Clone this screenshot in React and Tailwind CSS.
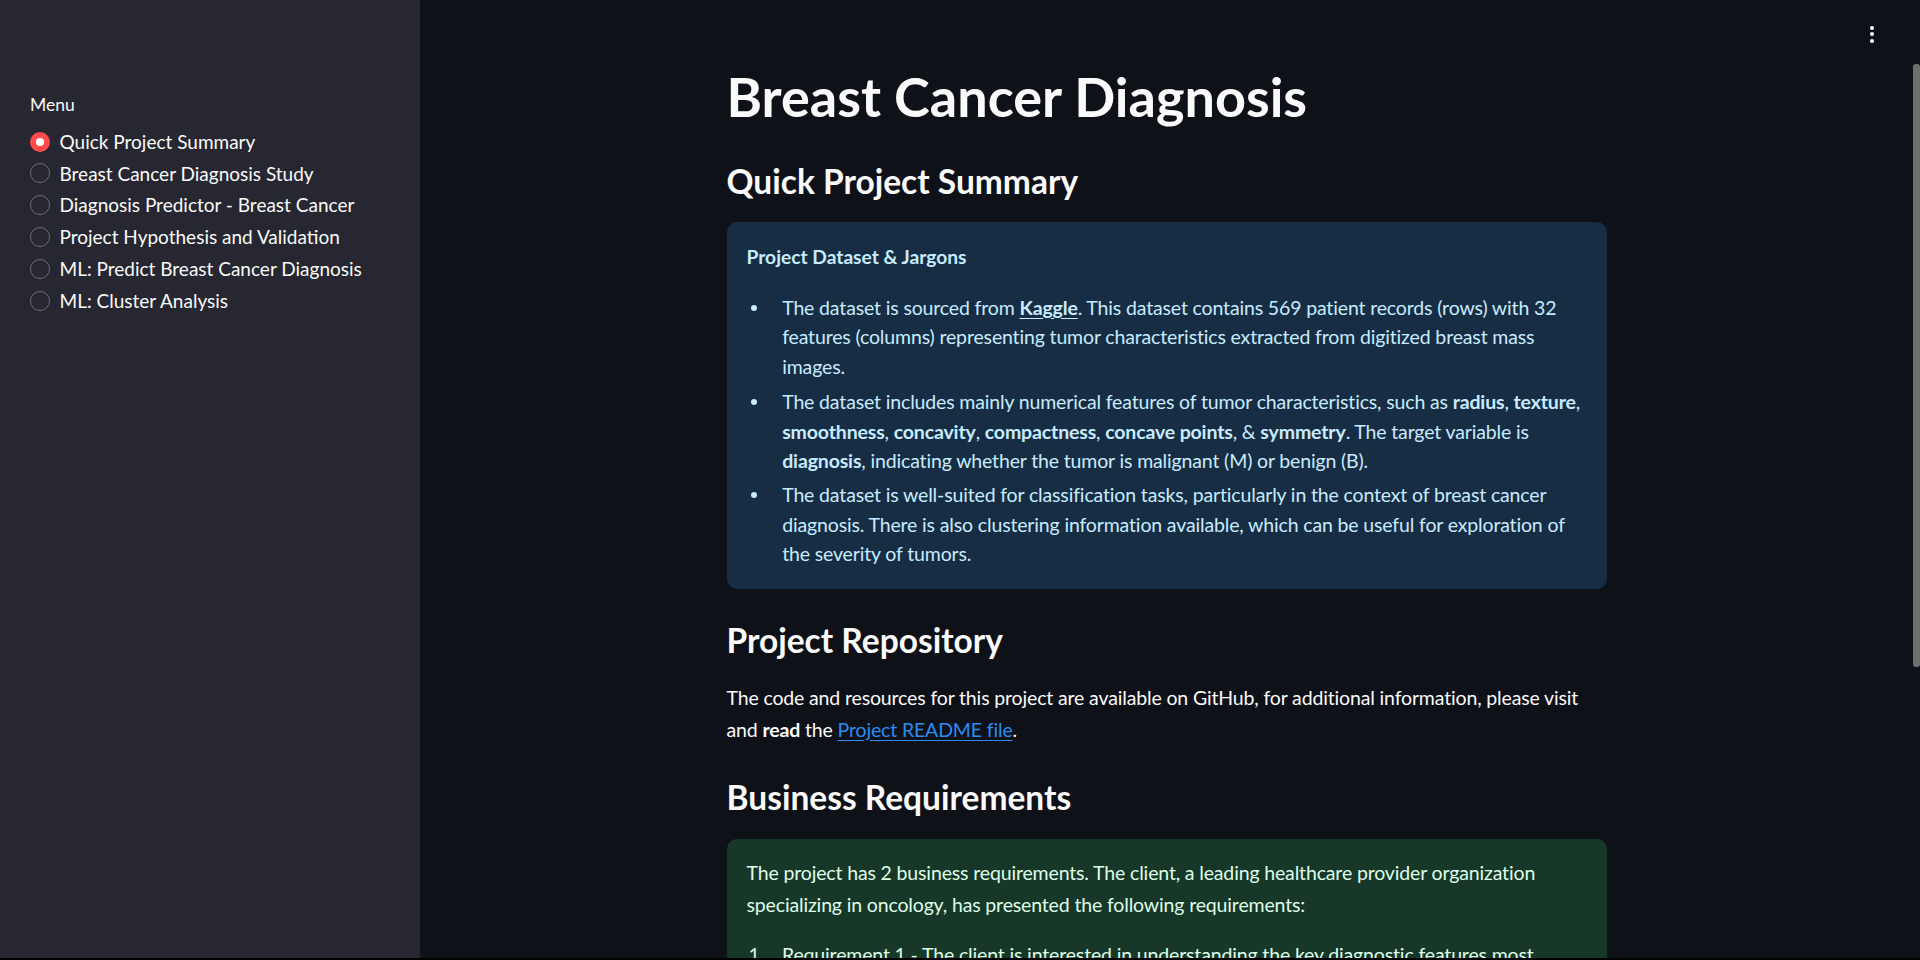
import React from "react";

const menu = [
  "Quick Project Summary",
  "Breast Cancer Diagnosis Study",
  "Diagnosis Predictor - Breast Cancer",
  "Project Hypothesis and Validation",
  "ML: Predict Breast Cancer Diagnosis",
  "ML: Cluster Analysis",
];

function Radio({ label, selected }) {
  return (
    <div className="flex h-[31.8px] items-center">
      {selected ? (
        <div className="flex h-[20px] w-[20px] items-center justify-center rounded-full bg-[#ff4b4b]">
          <div className="h-[8px] w-[8px] rounded-full bg-white" />
        </div>
      ) : (
        <div className="h-[20px] w-[20px] rounded-full border border-[#6b6c74] bg-[#262730]" />
      )}
      <span className="ml-[9.5px] text-[19px] leading-[31.8px] text-[#fafafa]">{label}</span>
    </div>
  );
}

function Bullet({ children, className = "" }) {
  return (
    <li className={"flex " + className}>
      <span className="flex h-[29.5px] w-[35.7px] shrink-0 items-center pl-[4.5px]">
        <span className="h-[6px] w-[6px] rounded-full bg-[#c7ebff]" />
      </span>
      <span className="flex-1 whitespace-nowrap">{children}</span>
    </li>
  );
}

export default function App() {
  return (
    <div className="relative flex h-screen w-full flex-col overflow-hidden bg-[#0e1117] text-[#fafafa] [font-family:Lato,'Noto_Sans',sans-serif]">
      <div className="flex min-h-0 flex-1">
        <aside className="w-[420px] shrink-0 bg-[#262730] pl-[30px] pt-[93px]">
          <div className="text-[17.5px] leading-[24px] text-[#fafafa]">Menu</div>
          <div className="mt-[8.8px] flex flex-col">
            {menu.map((m, i) => (
              <Radio key={m} label={m} selected={i === 0} />
            ))}
          </div>
        </aside>

        <main className="min-w-0 flex-1 pr-[7px]">
          <div className="mx-auto w-[880px] pt-[66px]">
            <h1 className="text-[54px] font-bold leading-[62px]">Breast Cancer Diagnosis</h1>

            <h3 className="mt-[32.6px] text-[33.5px] font-bold leading-[40px]">Quick Project Summary</h3>

            <div className="mt-[21.4px] rounded-[10px] bg-[#172d43] px-[20px] pb-[20.2px] pt-[19px] text-[#c7ebff]">
              <p className="text-[19.2px] font-bold leading-[32px]">Project Dataset &amp; Jargons</p>
              <ul className="mt-[19.8px] flex flex-col text-[19.5px] leading-[29.5px] tracking-[-0.15px]">
                <Bullet className="mb-[5.8px]">
                  The dataset is sourced from{" "}
                  <a className="font-bold underline underline-offset-[3px]">Kaggle</a>. This dataset contains 569
                  patient records (rows) with 32
                  <br />
                  features (columns) representing tumor characteristics extracted from digitized breast mass
                  <br />
                  images.
                </Bullet>
                <Bullet className="mb-[4.6px]">
                  The dataset includes mainly numerical features of tumor characteristics, such as <b>radius</b>,{" "}
                  <b>texture</b>,
                  <br />
                  <b>smoothness</b>, <b>concavity</b>, <b>compactness</b>, <b>concave points</b>, &amp;{" "}
                  <b>symmetry</b>. The target variable is
                  <br />
                  <b>diagnosis</b>, indicating whether the tumor is malignant (M) or benign (B).
                </Bullet>
                <Bullet>
                  The dataset is well-suited for classification tasks, particularly in the context of breast cancer
                  <br />
                  diagnosis. There is also clustering information available, which can be useful for exploration of
                  <br />
                  the severity of tumors.
                </Bullet>
              </ul>
            </div>

            <h3 className="mt-[31.6px] text-[33.5px] font-bold leading-[40px]">Project Repository</h3>

            <p className="mt-[21.3px] whitespace-nowrap text-[19.5px] leading-[32px] tracking-[-0.15px]">
              The code and resources for this project are available on GitHub, for additional information, please
              visit
              <br />
              and <b>read</b> the{" "}
              <a className="text-[#2b8cf2] underline underline-offset-[3px]">Project README file</a>.
            </p>

            <h3 className="mt-[31.5px] text-[33.5px] font-bold leading-[40px]">Business Requirements</h3>

            <div className="mt-[21.7px] rounded-[10px] bg-[#173828] px-[20px] pb-[20px] pt-[17.8px] text-[#dffde9]">
              <p className="whitespace-nowrap text-[19.5px] leading-[32px] tracking-[-0.15px]">
                The project has 2 business requirements. The client, a leading healthcare provider organization
                <br />
                specializing in oncology, has presented the following requirements:
              </p>
              <ol className="mt-[19.4px] flex flex-col gap-[4.6px] text-[19.5px] leading-[29.5px] tracking-[-0.15px]">
                <li className="flex">
                  <span className="w-[35.5px] shrink-0 pl-[2px]">1.</span>
                  <span className="flex-1 whitespace-nowrap">
                    Requirement 1 - The client is interested in understanding the key diagnostic features most
                    <br />
                    correlated with the diagnosis of breast cancer.
                  </span>
                </li>
                <li className="flex">
                  <span className="w-[35.5px] shrink-0 pl-[2px]">2.</span>
                  <span className="flex-1">
                    Requirement 2 - The client is interested in predicting whether a tumor is malignant or benign.
                  </span>
                </li>
              </ol>
            </div>
          </div>
        </main>
      </div>
      <div className="h-[2px] w-full shrink-0 bg-black" />

      {/* top-right toolbar menu */}
      <div className="absolute left-[1870px] top-[26px] flex flex-col gap-[2.3px]">
        <span className="h-[4px] w-[4px] rounded-full bg-white" />
        <span className="h-[4px] w-[4px] rounded-full bg-white" />
        <span className="h-[4px] w-[4px] rounded-full bg-white" />
      </div>

      {/* scrollbar thumb */}
      <div className="absolute right-0 top-[64px] h-[603px] w-[7px] rounded-[3px] bg-[#6e6e6e]" />
    </div>
  );
}
